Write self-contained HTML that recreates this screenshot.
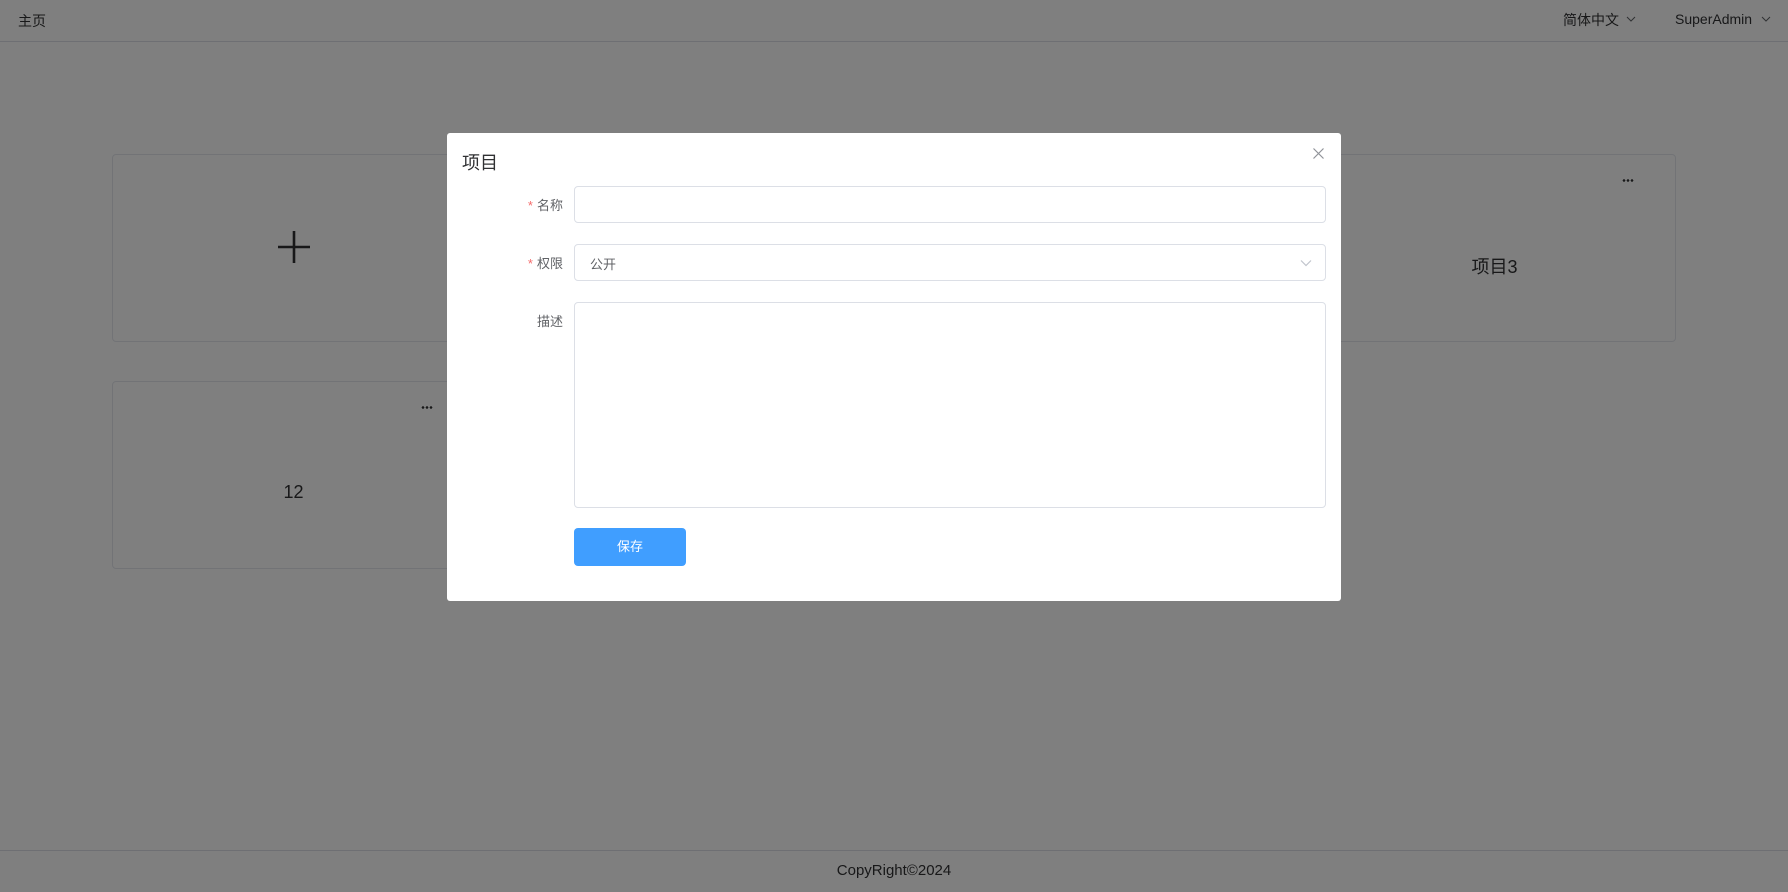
<!DOCTYPE html>
<html><head><meta charset="utf-8"><style>
*{box-sizing:border-box;margin:0;padding:0}
body{width:1788px;height:892px;position:relative;background:#fff;font-family:"Liberation Sans","Noto Sans CJK SC",sans-serif;color:#303133;overflow:hidden}
.abs{position:absolute}
.card{position:absolute;border:1px solid #e4e7ed;border-radius:4px;background:#fff;width:363px;height:188px}
.dots{position:absolute;right:41px;top:24px;width:12px;height:3px;background:radial-gradient(circle,#303133 1.2px,transparent 1.4px) 0 0/4px 3px repeat-x}
.ctext{position:absolute;left:0;right:0;text-align:center;font-size:18px}
.ov{position:absolute;inset:0;background:rgba(0,0,0,.5)}
.modal{position:absolute;left:447px;top:133px;width:894px;height:468px;background:#fff;border-radius:3px}
.lbl{position:absolute;right:778px;font-size:13px;color:#606266;white-space:nowrap}
.lbl b{color:#f56c6c;font-weight:normal;margin-right:4px}
.inp{position:absolute;left:127px;width:752px;border:1px solid #dcdfe6;border-radius:4px}
</style></head><body>
<div class="abs" style="left:0;top:0;width:1788px;height:42px;border-bottom:1px solid #dcdfe6"></div>
<div class="abs" style="left:18px;top:11px;font-size:14px">主页</div>
<div class="abs" style="left:1563px;top:10px;font-size:14px">简体中文</div>
<svg class="abs" style="left:1626px;top:15px" width="10" height="8" viewBox="0 0 10 8"><path d="M1 2l4 4 4-4" fill="none" stroke="#606266" stroke-width="1"/></svg>
<div class="abs" style="left:1675px;top:11px;font-size:14px">SuperAdmin</div>
<svg class="abs" style="left:1761px;top:15px" width="10" height="8" viewBox="0 0 10 8"><path d="M1 2l4 4 4-4" fill="none" stroke="#606266" stroke-width="1"/></svg>

<div class="card" style="left:112px;top:154px"><svg class="abs" style="left:165px;top:76px" width="32" height="32" viewBox="0 0 32 32"><path d="M16 0v32M0 16h32" stroke="#303133" stroke-width="2.6"/></svg></div>
<div class="card" style="left:513px;top:154px"><div class="dots"></div></div>
<div class="card" style="left:913px;top:154px"><div class="dots"></div></div>
<div class="card" style="left:1313px;top:154px"><div class="dots"></div><div class="ctext" style="top:98px">项目3</div></div>
<div class="card" style="left:112px;top:381px"><div class="dots"></div><div class="ctext" style="top:100px">12</div></div>

<div class="abs" style="left:0;top:850px;width:1788px;height:42px;border-top:1px solid #dcdfe6"></div>
<div class="abs" style="left:0;width:1788px;top:862px;text-align:center;font-size:15px">CopyRight©2024</div>

<div class="ov"></div>
<div class="modal">
 <div class="abs" style="left:15px;top:16px;font-size:18px;color:#303133">项目</div>
 <svg class="abs" style="left:866px;top:15px" width="11" height="11" viewBox="0 0 11 11"><path d="M0.5 0.5l10 10M10.5 0.5l-10 10" stroke="#909399" stroke-width="1.2"/></svg>
 <div class="lbl" style="top:62px"><b>*</b>名称</div>
 <div class="inp" style="top:53px;height:37px"></div>
 <div class="lbl" style="top:120px"><b>*</b>权限</div>
 <div class="inp" style="top:111px;height:37px"><span class="abs" style="left:15px;top:9px;font-size:13px;color:#606266">公开</span><svg class="abs" style="right:13px;top:14px" width="12" height="8" viewBox="0 0 12 8"><path d="M1 1.5l5 5 5-5" fill="none" stroke="#c0c4cc" stroke-width="1.2"/></svg></div>
 <div class="lbl" style="top:178px">描述</div>
 <div class="inp" style="top:169px;height:206px"></div>
 <div class="abs" style="left:127px;top:395px;width:112px;height:38px;background:#409eff;border-radius:4px;color:#fff;font-size:13px;text-align:center;line-height:38px">保存</div>
</div>
</body></html>
